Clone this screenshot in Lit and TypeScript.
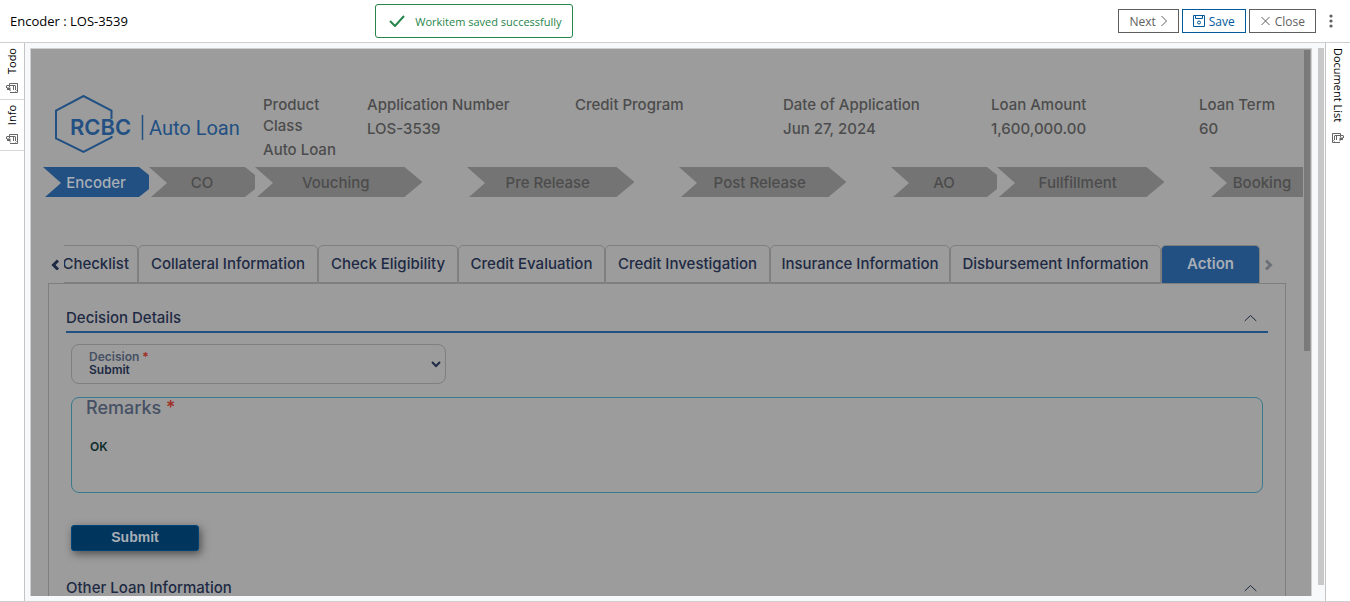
import { LitElement, html, css, svg } from "lit";
import { customElement } from "lit/decorators.js";
import { classMap } from "lit/directives/class-map.js";

const facts = [
  { label: "Product Class", value: "Auto Loan" },
  { label: "Application Number", value: "LOS-3539" },
  { label: "Credit Program", value: "" },
  { label: "Date of Application", value: "Jun 27, 2024" },
  { label: "Loan Amount", value: "1,600,000.00" },
  { label: "Loan Term", value: "60" },
];

const steps = [
  { name: "Encoder", wide: false },
  { name: "CO", wide: false },
  { name: "Vouching", wide: true },
  { name: "Pre Release", wide: true },
  { name: "Post Release", wide: true },
  { name: "AO", wide: false },
  { name: "Fullfillment", wide: true },
  { name: "Booking", wide: false },
];

const tabs = [
  "Checklist",
  "Collateral Information",
  "Check Eligibility",
  "Credit Evaluation",
  "Credit Investigation",
  "Insurance Information",
  "Disbursement Information",
  "Action",
];

const pinIcon = svg`
  <path d="M3.500 2.500V.500h8v7h-1" />
  <path d="M3.500 4V2.500h6M4 9.500h5.500v-1" />
  <path d="M5 9.500h6.500v-9" />
  <path d="M1 2.500h2.500M.500 2.500V5" />
  <path d="M7.500 3v4M9.500 3v4" />
  <path d="M1 4.500h3.500v4L3 7 1 7z" fill="currentColor" stroke="none" />`;

@customElement("side-rail")
export class SideRail extends LitElement {
  static properties = { items: { type: Array }, side: { type: String } };
  declare items: string[];
  declare side: string;

  static styles = css`
    :host {
      display: flex;
      flex-direction: column;
      width: 24px;
      background: #fff;
      font: 11px "Open Sans", "Noto Sans", sans-serif;
    }
    .item {
      display: flex;
      flex-direction: column;
      align-items: center;
      gap: 9px;
      width: 24px;
      padding: 5px 0 6px;
      border: 0;
      border-bottom: 1px solid #d6d6d6;
      background: none;
      color: #000;
      font: inherit;
      line-height: 16px;
    }
    .label {
      writing-mode: vertical-rl;
    }
    .left .label {
      transform: rotate(180deg);
    }
    .right {
      border-bottom-color: transparent;
      gap: 11px;
    }
    svg {
      width: 12px;
      height: 10px;
      fill: none;
      stroke: currentColor;
      color: #666;
    }
    .right svg {
      transform: scaleX(-1);
    }
  `;

  render() {
    return this.items.map(
      (name) => html`<button class="item ${this.side}">
        <span class="label">${name}</span>
        <svg viewBox="0 0 12 10" aria-hidden="true">${pinIcon}</svg>
      </button>`
    );
  }
}

@customElement("app-root")
export class AppRoot extends LitElement {
  static styles = css`
    :host {
      display: flex;
      flex-direction: column;
      height: 100vh;
      box-sizing: border-box;
      background: #fff;
      font: 12px "Open Sans", "Noto Sans", sans-serif;
      color: #000;
    }
    * {
      box-sizing: border-box;
    }
    button {
      font: inherit;
    }
    svg {
      fill: none;
      stroke: currentColor;
      flex: none;
    }
    .top {
      position: relative;
      display: flex;
      align-items: center;
      justify-content: space-between;
      height: 43px;
      padding: 0 11px 0 10px;
      border-bottom: 1px solid #cfcfcf;
    }
    h1 {
      margin: 0;
      font-size: 13px;
      font-weight: 400;
    }
    .toast {
      position: absolute;
      top: 4px;
      left: 27.8%;
      display: flex;
      align-items: center;
      gap: 10px;
      height: 34px;
      padding: 0 10px 0 13px;
      border: 1px solid #26854a;
      border-radius: 3px;
      background: #fff;
      color: #26854a;
      font-size: 11px;
      white-space: nowrap;
    }
    .actions {
      display: flex;
      align-items: center;
      gap: 3px;
    }
    .tool {
      display: flex;
      align-items: center;
      justify-content: center;
      gap: 4px;
      height: 24px;
      padding: 0 10px;
      border: 1px solid #5e5e5e;
      background: #fff;
      color: #5e5e5e;
    }
    .tool.save {
      border-color: #005a9c;
      color: #005a9c;
    }
    .more {
      display: flex;
      margin-left: 4px;
      padding: 4px 6px;
      border: 0;
      background: none;
      color: #5e5e5e;
    }
    .more svg {
      fill: currentColor;
      stroke: none;
    }
    .body {
      display: flex;
      flex: 1;
      min-height: 0;
      border-bottom: 1px solid #cfcfcf;
    }
    .work {
      display: flex;
      flex: 1;
      gap: 6px;
      min-width: 0;
      padding: 5px 1px 5px 5px;
      border: solid #c4c4c4;
      border-width: 0 1px;
      background: #f8f9fb;
    }
    .bar {
      flex: none;
      width: 6px;
      height: 98%;
      background: #c8c8c8;
    }
    .panel {
      display: flex;
      flex: 1;
      min-width: 0;
      overflow: hidden;
      border: 1px solid #cfcfcf;
      border-bottom: 0;
      background: #9c9c9c;
      color: #1e2a44;
      font-family: Inter, "Noto Sans", sans-serif;
      font-size: 15px;
      font-weight: 500;
      line-height: 24px;
    }
    .panel .bar {
      height: 55%;
      margin: 1px 1px 0;
      background: #7a7a7a;
    }
    .form {
      flex: 1;
      min-width: 0;
      overflow: hidden;
    }
    .facts {
      display: grid;
      grid-template-columns: 2fr 1fr repeat(4, 2fr) 1fr;
      height: 118px;
      padding: 44px 0 0 24px;
      color: #4c4c4c;
    }
    .facts dl {
      margin: 0;
    }
    .facts dt {
      line-height: 21px;
      padding: 1px 20px 0 0;
    }
    .facts dl:last-child dt {
      padding-right: 0;
    }
    .facts dd {
      margin: 0;
      padding-top: 2px;
      white-space: nowrap;
    }
    .logo {
      width: 186px;
      height: 60px;
      margin-top: 2px;
      color: #225083;
      stroke-width: 2;
    }
    .logo text {
      fill: currentColor;
      stroke: none;
    }
    .brand {
      font: 600 22px Inter, sans-serif;
    }
    .product {
      font: 400 20px Roboto, sans-serif;
    }
    .steps {
      display: grid;
      grid-template-columns: 1fr 1fr 2fr 2fr 2fr 1fr 2fr 1fr;
      width: 100%;
      margin: 0 0 0 12px;
      padding: 0;
      list-style: none;
    }
    .step {
      height: 30px;
      padding-top: 2px;
      line-height: 28px;
      background: #747474;
      color: #4c4c4c;
      text-align: center;
      white-space: nowrap;
      clip-path: polygon(
        0 0, calc(100% - 10px) 0, 100% 8px, 100% 22px,
        calc(100% - 10px) 100%, 2px 100%, 18px 16px
      );
    }
    .step.wide {
      width: 79%;
      padding-right: 6px;
      clip-path: polygon(
        0 0, calc(100% - 18px) 0, 100% 15px,
        calc(100% - 18px) 100%, 2px 100%, 18px 16px
      );
    }
    .step.now {
      background: #225083;
      color: #a8aeb5;
    }
    .tabbar {
      display: flex;
      align-items: center;
      gap: 5px;
      margin: 48px 30px 0 20px;
    }
    .arrow {
      display: flex;
      padding: 0;
      border: 0;
      background: none;
      color: #1e2a44;
      stroke-width: 3;
    }
    .arrow.off {
      color: #6c7178;
    }
    .tabs {
      display: grid;
      flex: 1;
      min-width: 0;
      grid-template-columns: 74fr 180fr 140fr 147fr 165fr 180fr 211fr 99fr;
      overflow: hidden;
    }
    .tab {
      display: flex;
      justify-content: center;
      min-width: 0;
      height: 38px;
      padding: 6px 0 0;
      border: 1px solid #7f7f7f;
      border-radius: 5px 5px 0 0;
      background: none;
      color: inherit;
      white-space: nowrap;
    }
    .tab:first-child {
      justify-content: flex-end;
      padding-right: 8px;
      border-left: 0;
      border-radius: 0 5px 0 0;
    }
    .tab.on {
      background: #225083;
      border-bottom: 0;
      color: #a8aeb5;
      font-weight: 600;
    }
    .sheet {
      margin: 0 17px;
      padding: 22px 17px;
      min-height: 400px;
      border: 1px solid #7f7f7f;
    }
    .section {
      display: flex;
      align-items: center;
      justify-content: space-between;
      height: 27px;
      padding: 0 11px 2px 0;
      border-bottom: 2px solid #225083;
    }
    h2 {
      margin: 0;
      font-size: 15px;
      font-weight: 500;
    }
    .fields {
      display: flex;
      flex-direction: column;
      padding: 11px 5px 25px;
    }
    .field {
      display: grid;
      align-items: center;
      width: 31.5%;
      height: 40px;
      border: 1px solid #7f7f7f;
      border-radius: 8px;
    }
    .field > * {
      grid-area: 1 / 1;
    }
    .field label {
      align-self: start;
      padding: 5px 0 0 17px;
      color: #465064;
      font-size: 12px;
      font-weight: 600;
      line-height: 14px;
    }
    .field svg {
      justify-self: end;
      margin-right: 4px;
      stroke-width: 2;
      pointer-events: none;
    }
    .req {
      color: #a02c22;
    }
    select {
      width: 100%;
      height: 38px;
      padding: 12px 17px 0;
      border: 0;
      background: none;
      color: inherit;
      font: inherit;
      font-size: 12px;
      font-weight: 600;
      appearance: none;
    }
    .notes {
      display: flex;
      flex-direction: column;
      height: 96px;
      margin-top: 13px;
      border: 1px solid #3a7a8c;
      border-radius: 8px;
    }
    .notes label {
      padding-left: 14px;
      color: #465064;
      font-size: 18px;
      line-height: 20px;
    }
    textarea {
      flex: 1;
      padding: 19px 18px;
      border: 0;
      background: none;
      color: #0e2d2b;
      font: inherit;
      font-size: 12px;
      font-weight: 600;
      line-height: 20px;
      resize: none;
    }
    .submit {
      width: 128px;
      height: 26px;
      margin-top: 32px;
      padding: 0 0 2px;
      border: 1px solid #004479;
      border-radius: 3px;
      background: #00365e;
      color: #a8aeb5;
      font: bold 14px "Liberation Sans", Arial, sans-serif;
      box-shadow: 2px 3px 8px rgba(0, 0, 0, 0.5);
    }
  `;

  render() {
    const collapse = html`<svg width="13" height="8" viewBox="0 0 13 8" aria-hidden="true">
      <path d="M.7 7l5.800-5.500L12.300 7" />
    </svg>`;
    return html`
      <header class="top">
        <h1>Encoder : LOS-3539</h1>
        <div class="toast" role="status">
          <svg width="16" height="12" viewBox="0 0 16 12" stroke-width="2">
            <path d="M1 6l5 5L15 1" />
          </svg>
          Workitem saved successfully
        </div>
        <div class="actions">
          <button class="tool">
            Next
            <svg width="8" height="12" viewBox="0 0 8 12"><path d="M1.500 1l5 5-5 5" /></svg>
          </button>
          <button class="tool save">
            <svg width="12" height="12" viewBox="0 0 12 12">
              <path d="M.5.500h11v11H.500zM2.500.500v3h7v-3" />
              <circle cx="6" cy="7.500" r="1.500" />
            </svg>
            Save
          </button>
          <button class="tool">
            <svg width="11" height="12" viewBox="0 0 11 12"><path d="M1.500 2l8 8M9.500 2l-8 8" /></svg>
            Close
          </button>
          <button class="more" aria-label="More">
            <svg width="4" height="14" viewBox="0 0 4 14">
              <circle cx="2" cy="2" r="1.600" /><circle cx="2" cy="7" r="1.600" />
              <circle cx="2" cy="12" r="1.600" />
            </svg>
          </button>
        </div>
      </header>
      <div class="body">
        <side-rail side="left" .items=${["Todo", "Info"]}></side-rail>
        <main class="work">
          <div class="panel">
            <div class="form">
              <div class="facts">
                <svg class="logo" viewBox="0 0 186 60" role="img" aria-label="RCBC Auto Loan">
                  <path d="M56.500 24V15.500L28.500 1 1 15.500v28L28.500 57l28-14.500V41" />
                  <text class="brand" x="15" y="40">RCBC</text>
                  <path d="M87.500 20v25" stroke-width="1.500" />
                  <text class="product" x="94" y="40">Auto Loan</text>
                </svg>
                ${facts.map((f) => html`<dl><dt>${f.label}</dt><dd>${f.value}</dd></dl>`)}
              </div>
              <ol class="steps">
                ${steps.map(
                  (s, i) => html`<li class=${classMap({ step: true, wide: s.wide, now: i === 0 })}>
                    ${s.name}
                  </li>`
                )}
              </ol>
              <div class="tabbar">
                <button class="arrow" aria-label="Previous tabs">
                  <svg width="8" height="12" viewBox="0 0 8 12"><path d="M7 2.500L2.500 7 7 11.500" /></svg>
                </button>
                <div class="tabs" role="tablist">
                  ${tabs.map(
                    (t) => html`<button
                      role="tab"
                      class=${classMap({ tab: true, on: t === "Action" })}
                    >${t}</button>`
                  )}
                </div>
                <button class="arrow off" aria-label="Next tabs">
                  <svg width="8" height="12" viewBox="0 0 8 12"><path d="M1 2.500L5.500 7 1 11.500" /></svg>
                </button>
              </div>
              <section class="sheet">
                <div class="section"><h2>Decision Details</h2>${collapse}</div>
                <div class="fields">
                  <div class="field">
                    <label for="decision">Decision <span class="req">*</span></label>
                    <select id="decision"><option>Submit</option></select>
                    <svg width="10" height="8" viewBox="0 0 10 8"><path d="M1 2l4 4 4-4" /></svg>
                  </div>
                  <div class="notes">
                    <label for="remarks">Remarks <span class="req">*</span></label>
                    <textarea id="remarks" .value=${"OK"}></textarea>
                  </div>
                  <button class="submit">Submit</button>
                </div>
                <div class="section"><h2>Other Loan Information</h2>${collapse}</div>
              </section>
            </div>
            <div class="bar"></div>
          </div>
          <div class="bar"></div>
        </main>
        <side-rail side="right" .items=${["Document List"]}></side-rail>
      </div>
    `;
  }
}
